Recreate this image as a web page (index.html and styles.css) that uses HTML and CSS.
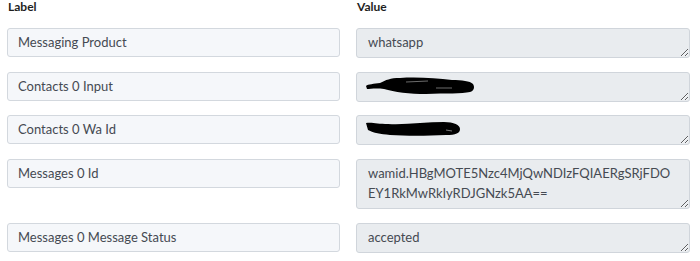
FILE: index.html
```html
<!DOCTYPE html>
<html>
<head>
<meta charset="utf-8">
<link rel="stylesheet" href="styles.css">
</head>
<body>
<div class="table">
  <div class="row head">
    <div class="th">Label</div>
    <div class="th">Value</div>
  </div>
  <div class="row">
    <div class="label">Messaging Product</div>
    <div class="cell"><textarea class="value" readonly>whatsapp</textarea></div>
  </div>
  <div class="row">
    <div class="label">Contacts 0 Input</div>
    <div class="cell"><textarea class="value" readonly></textarea>
      <svg class="redact r1" width="110" height="18" viewBox="0 0 110 18"><path d="M0 9 C2 7 8 7 14 6 C20 3 24 1 34 1 C50 0 70 1 86 3 C96 3 104 4 107 7 C109 10 108 14 104 15 C96 17 80 16 60 17 C44 17 28 15 18 12 C10 11 4 12 1 12 Z" fill="#000"/><path d="M40 5 L62 4 M70 11 L86 11" stroke="#888" stroke-width="0.8"/></svg>
    </div>
  </div>
  <div class="row">
    <div class="label">Contacts 0 Wa Id</div>
    <div class="cell"><textarea class="value" readonly></textarea>
      <svg class="redact r2" width="95" height="16" viewBox="0 0 95 16"><path d="M0 2 C6 1 12 3 22 3 C40 4 60 1 78 1 C88 1 94 4 94 8 C94 12 90 14 80 14 C60 15 40 15 24 14 C14 13 8 12 2 9 Z" fill="#000"/><path d="M80 9 L86 10" stroke="#999" stroke-width="0.8"/></svg>
    </div>
  </div>
  <div class="row">
    <div class="label">Messages 0 Id</div>
    <div class="cell"><textarea class="value tall" readonly>wamid.HBgMOTE5Nzc4MjQwNDIzFQIAERgSRjFDOEY1RkMwRkIyRDJGNzk5AA==</textarea></div>
  </div>
  <div class="row">
    <div class="label">Messages 0 Message Status</div>
    <div class="cell"><textarea class="value" readonly>accepted</textarea></div>
  </div>
</div>
</body>
</html>
```
FILE: styles.css
```css
html, body {
  margin: 0;
  padding: 0;
  background: #fff;
}
body {
  font-family: Lato, "Open Sans", sans-serif;
  color: #454a52;
}
.table {
  padding: 0 10px 0 7px;
  display: flex;
  flex-direction: column;
  gap: 13.67px;
}
.row {
  display: grid;
  grid-template-columns: 333px 334px;
  column-gap: 16px;
  align-items: start;
}
.head {
  margin-top: 0;
  margin-bottom: 1.33px;
}
.th {
  font-weight: 700;
  font-size: 12px;
  color: #1e1e1e;
  padding-left: 1px;
  line-height: 13px;
}
.label {
  box-sizing: border-box;
  height: 29px;
  border: 1px solid #d3d8de;
  border-radius: 3px;
  background: #f5f7fa;
  font-size: 13px;
  line-height: 27px;
  padding: 0 10px;
}
.cell {
  position: relative;
}
.value {
  display: block;
  box-sizing: border-box;
  width: 334px;
  height: 30px;
  margin: 0;
  border: 1px solid #d0d5db;
  border-radius: 3px;
  background: #e9ecef;
  font-family: Lato, "Open Sans", sans-serif;
  font-size: 13px;
  line-height: 20px;
  color: #454a52;
  padding: 3px 12px 3px 11px;
  outline: none;
  resize: vertical;
}
.tall {
  height: 50px;
}
.redact {
  position: absolute;
  left: 10px;
}
.r1 { top: 5px; }
.r2 { top: 6px; }
```
